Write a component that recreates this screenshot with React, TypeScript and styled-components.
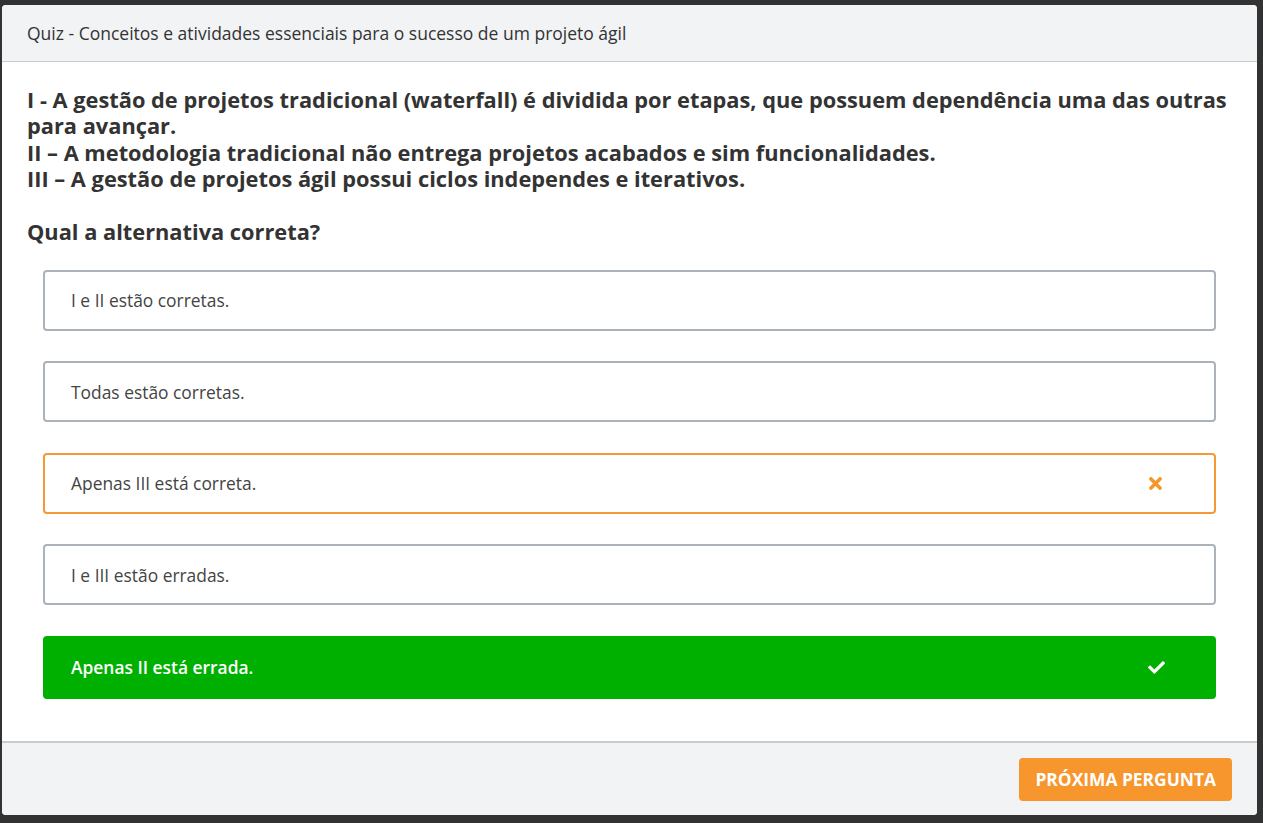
import React from "react";
import styled, { createGlobalStyle } from "styled-components";
import { FaCheck, FaTimes } from "react-icons/fa";

const GlobalStyle = createGlobalStyle`
  html, body {
    margin: 0;
    padding: 0;
    background: #323232;
    font-family: "Open Sans", "Noto Sans", sans-serif;
  }
`;

const Backdrop = styled.div`
  padding: 5px 6px 8px 2px;
  height: 823px;
  box-sizing: border-box;
`;

const Modal = styled.div`
  background: #fff;
  border-radius: 4px;
  height: 100%;
  display: flex;
  flex-direction: column;
  overflow: hidden;
`;

const Header = styled.div`
  height: 56px;
  display: flex;
  align-items: center;
  padding: 0 25px;
  background: #f2f3f5;
  border-bottom: 1px solid #c9cbce;
  color: #333;
  font-size: 17.5px;
`;

const Body = styled.div`
  flex: 1;
  padding: 25px 25px 0;
  color: #333;
`;

const Question = styled.div`
  font-size: 21.8px;
  font-weight: 700;
  line-height: 26.3px;
`;

const Prompt = styled(Question)`
  margin-top: 26.5px;
`;

const Options = styled.div`
  display: flex;
  flex-direction: column;
  gap: 30.5px;
  margin: 25px 16px 0;
`;

type Status = "idle" | "wrong" | "right";

const Option = styled.div<{ $status: Status }>`
  height: ${(p) => (p.$status === "right" ? 63 : 61)}px;
  box-sizing: border-box;
  display: flex;
  align-items: center;
  justify-content: space-between;
  padding: 0 49px 0 26px;
  border-radius: 4px;
  font-size: 17.4px;
  border: 2px solid
    ${(p) =>
      p.$status === "wrong" ? "#f39a35" : p.$status === "right" ? "#00b000" : "#acb2b9"};
  background: ${(p) => (p.$status === "right" ? "#00b000" : "#fff")};
  color: ${(p) => (p.$status === "right" ? "#fff" : "#444")};
  font-weight: ${(p) => (p.$status === "right" ? 600 : 400)};

  svg {
    height: ${(p) => (p.$status === "right" ? 17 : 19)}px;
    width: auto;
    color: ${(p) => (p.$status === "right" ? "#fff" : "#f7962c")};
  }
`;

const Footer = styled.div`
  height: 74px;
  box-sizing: border-box;
  display: flex;
  align-items: center;
  justify-content: flex-end;
  padding: 0 25px;
  background: #f2f3f5;
  border-top: 2px solid #c9cbce;
`;

const NextButton = styled.button`
  height: 43px;
  padding: 0 16px;
  border: none;
  border-radius: 4px;
  background: #f7962c;
  color: #fff;
  font-family: "Open Sans", "Noto Sans", sans-serif;
  font-size: 17.4px;
  font-weight: 700;
  text-transform: uppercase;
  cursor: pointer;
`;

const answers: { text: string; status: Status }[] = [
  { text: "I e II estão corretas.", status: "idle" },
  { text: "Todas estão corretas.", status: "idle" },
  { text: "Apenas III está correta.", status: "wrong" },
  { text: "I e III estão erradas.", status: "idle" },
  { text: "Apenas II está errada.", status: "right" },
];

export default function App() {
  return (
    <Backdrop>
      <GlobalStyle />
      <Modal>
        <Header>Quiz - Conceitos e atividades essenciais para o sucesso de um projeto ágil</Header>
        <Body>
          <Question>
            I - A gestão de projetos tradicional (waterfall) é dividida por etapas, que possuem
            dependência uma das outras para avançar.
            <br />
            II – A metodologia tradicional não entrega projetos acabados e sim funcionalidades.
            <br />
            III – A gestão de projetos ágil possui ciclos independes e iterativos.
          </Question>
          <Prompt>Qual a alternativa correta?</Prompt>
          <Options>
            {answers.map((a) => (
              <Option key={a.text} $status={a.status}>
                <span>{a.text}</span>
                {a.status === "wrong" && <FaTimes />}
                {a.status === "right" && <FaCheck />}
              </Option>
            ))}
          </Options>
        </Body>
        <Footer>
          <NextButton>Próxima pergunta</NextButton>
        </Footer>
      </Modal>
    </Backdrop>
  );
}
